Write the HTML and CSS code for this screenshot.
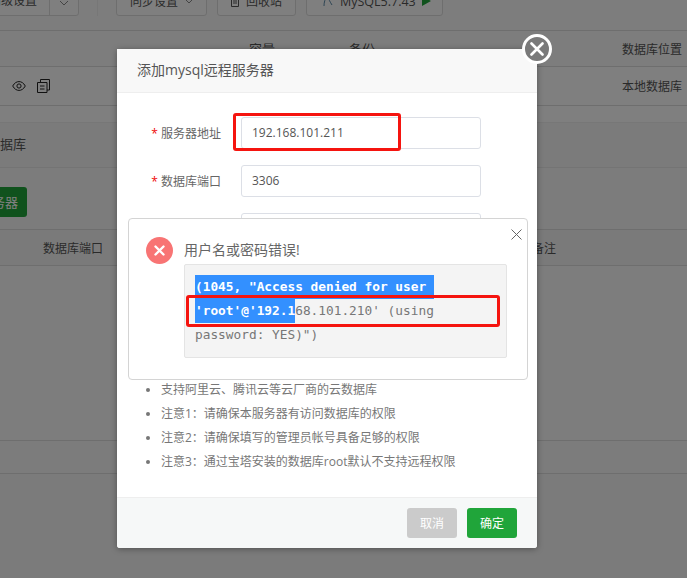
FILE: index.html
```html
<!DOCTYPE html>
<html lang="en">
<head>
  <meta charset="UTF-8" />
  <meta name="viewport" content="width=device-width, initial-scale=1.0" />
  <title>添加mysql远程服务器</title>
  <link rel="stylesheet" href="styles.css">
</head>
<body>
  <!-- Page behind the mask -->
  <div class="page">
    <div class="toolbar">
      <div class="tool-btn tool-split">
        <span class="tool-main">高级设置</span>
        <span class="tool-arrow"><svg width="10" height="6" viewBox="0 0 10 6"><path d="M1 1l4 4 4-4" fill="none" stroke="#888" /></svg></span>
      </div>
      <span class="tool-divider"></span>
      <div class="tool-btn tool-sync">同步设置
        <svg width="10" height="6" viewBox="0 0 10 6"><path d="M1 1l4 4 4-4" fill="none" stroke="#888" /></svg>
      </div>
      <div class="tool-btn tool-bin">
        <svg width="10" height="12" viewBox="0 0 10 12"><path d="M1.5 2.5h7v9h-7zM0 2.5h10M3.5 2.5v-2h3v2M4 5v4M6 5v4" fill="none" stroke="#555" /></svg>
        回收站
      </div>
      <div class="tool-btn tool-mysql">
        <svg width="12" height="12" viewBox="0 0 12 12"><path d="M2 11c0-4 1-7 3-9 2 2 3 5 5 8" fill="none" stroke="#5b8aa8" /></svg>
        MySQL5.7.43
        <svg width="9" height="10" viewBox="0 0 9 10"><path d="M0 0l9 5-9 5z" fill="#20a53a" /></svg>
      </div>
    </div>
    <div class="db-row db-head">
      <span class="col-size">容量</span>
      <span class="col-backup">备份</span>
      <span class="col-pos">数据库位置</span>
    </div>
    <div class="db-row db-item">
      <span class="row-icons">
        <svg width="14" height="10" viewBox="0 0 14 10"><path d="M.7 5C2.500 1.800 4.700.6 7 .6S11.500 1.800 13.300 5C11.500 8.200 9.300 9.400 7 9.400S2.500 8.200.7 5z" fill="none" stroke="#222" /><circle cx="7" cy="5" r="2.100" fill="none" stroke="#222" /></svg>
        <svg width="13" height="14" viewBox="0 0 13 14"><path d="M3.500 3V.5h9V11H10M.5 3.500h9.500v10H.5zM3 7h4.500M3 10h4.500" fill="none" stroke="#222" /></svg>
      </span>
      <span class="col-pos">本地数据库</span>
    </div>
    <div class="band"></div>
    <div class="tabs"><span class="tab-name">数据库</span></div>
    <div class="actions"><span class="add-btn">添加远程服务器</span></div>
    <div class="db-row server-head">
      <span class="col-port">数据库端口</span>
      <span class="col-note">备注</span>
    </div>
    <div class="server-empty"></div>
    <div class="server-foot"></div>
  </div>
  <div class="mask"></div>

  <!-- Add server dialog -->
  <div class="modal">
    <div class="modal-title">添加mysql远程服务器</div>
    <div class="modal-body">
      <div class="form-row">
        <label class="form-label">服务器地址</label>
        <div class="form-input">192.168.101.211</div>
      </div>
      <div class="form-row">
        <label class="form-label">数据库端口</label>
        <div class="form-input">3306</div>
      </div>
      <div class="form-row">
        <label class="form-label">管理员名称</label>
        <div class="form-input">root</div>
      </div>
      <div class="form-row">
        <label class="form-label">管理员密码</label>
        <div class="form-input"></div>
      </div>
      <div class="form-row">
        <label class="form-label">备注</label>
        <div class="form-input"></div>
      </div>
      <ul class="tips">
        <li>支持阿里云、腾讯云等云厂商的云数据库</li>
        <li>注意1：请确保本服务器有访问数据库的权限</li>
        <li>注意2：请确保填写的管理员帐号具备足够的权限</li>
        <li>注意3：通过宝塔安装的数据库root默认不支持远程权限</li>
      </ul>
    </div>
    <div class="modal-foot">
      <button class="btn btn-cancel">取消</button>
      <button class="btn btn-ok">确定</button>
    </div>
    <div class="modal-close">
      <svg width="14" height="14" viewBox="0 0 14 14"><path d="M1.500 1.500l11 11M12.500 1.500l-11 11" stroke="#fff" stroke-width="2.600" stroke-linecap="round" /></svg>
    </div>
    <div class="mark mark-address"></div>
  </div>

  <!-- Error message on top -->
  <div class="alert">
    <div class="alert-icon">
      <svg width="11" height="11" viewBox="0 0 11 11"><path d="M1.500 1.500l8 8M9.500 1.500l-8 8" stroke="#fff" stroke-width="2.400" stroke-linecap="round" /></svg>
    </div>
    <div class="alert-main">
      <div class="alert-title">用户名或密码错误!</div>
      <div class="alert-pre">
        <div class="pre-line"><span class="picked">(1045, "Access denied for user </span></div>
        <div class="pre-line"><span class="picked">'root'@'192.1</span>68.101.210' (using</div>
        <div class="pre-line">password: YES)")</div>
      </div>
    </div>
    <div class="alert-close">
      <svg width="11" height="11" viewBox="0 0 11 11"><path d="M.5.500l10 10M10.500.500l-10 10" stroke="#666" stroke-width="1" /></svg>
    </div>
    <div class="mark mark-host"></div>
  </div>
</body>
</html>
```

FILE: styles.css
```css
* {
  margin: 0;
  padding: 0;
  box-sizing: border-box;
}
html, body {
  height: 100%;
  overflow: hidden;
}
body {
  background: #f7f7f7;
  font-family: "Open Sans", "Noto Sans CJK SC", sans-serif;
  font-size: 12px;
  color: #666;
  position: relative;
}
/* Page behind the mask */
.page {
  background: #fafafa;
}
.toolbar {
  display: flex;
  align-items: flex-end;
  padding-bottom: 14px;
  border-bottom: 1px solid #ddd;
  height: 31px;
  margin-left: -12px;
}
.tool-btn {
  height: 30px;
  display: flex;
  align-items: center;
  gap: 6px;
  flex: none;
  border: 1px solid #ddd;
  border-radius: 3px;
  background: #fff;
  font-size: 12px;
  color: #555;
}
.tool-split {
  width: 91px;
  gap: 0;
}
.tool-main {
  width: 61px;
  height: 100%;
  line-height: 28px;
  white-space: nowrap;
  border-right: 1px solid #ddd;
}
.tool-arrow {
  width: 28px;
  text-align: center;
}
.tool-divider {
  width: 1px;
  height: 30px;
  background: #eee;
  margin: 0 18px;
  flex: none;
}
.tool-sync {
  width: 91px;
  padding-left: 13px;
}
.tool-bin {
  width: 79px;
  margin-left: 10px;
  padding-left: 12px;
}
.tool-mysql {
  width: 137px;
  margin-left: 10px;
  padding-left: 15px;
  font-size: 12.500px;
}
.db-row {
  display: flex;
  align-items: center;
  border-bottom: 1px solid #ddd;
  position: relative;
}
.db-head {
  height: 36px;
  font-size: 13px;
  padding-left: 249px;
  color: #555;
}
.col-backup {
  margin-left: 74px;
}
.col-pos {
  margin-left: auto;
  padding-right: 5px;
  font-size: 12px;
}
.db-item {
  height: 39px;
  background: #fff;
  padding-left: 12px;
  color: #555;
}
.row-icons {
  display: flex;
  align-items: center;
  gap: 11px;
}
.band {
  height: 17px;
  border-bottom: 1px solid #eee;
  background: #fff;
}
.tabs {
  height: 45px;
  display: flex;
  align-items: center;
  padding-bottom: 3px;
  border-bottom: 1px solid #e8e8e8;
  background: #f6f6f6;
}
.tab-name {
  margin-left: -13px;
  font-size: 13px;
  color: #555;
}
.actions {
  height: 61px;
  padding-top: 19px;
  background: #f9f9f9;
}
.add-btn {
  display: block;
  width: 100px;
  height: 30px;
  margin-left: -73px;
  background: #20a53a;
  border-radius: 3px;
  color: #fff;
  font-size: 13px;
  line-height: 30px;
  text-align: right;
  padding-right: 13px;
  white-space: nowrap;
}
.server-head {
  height: 37px;
  padding-left: 43px;
  background: #f5f5f5;
  border-top: 1px solid #ddd;
  color: #555;
}
.col-note {
  margin-left: 429px;
}
.server-empty {
  height: 175px;
  background: #fafafa;
  border-bottom: 1px solid #ddd;
}
.server-foot {
  height: 33px;
  background: #f8f8f8;
  border-bottom: 1px solid #ddd;
}
.mask {
  position: absolute;
  inset: 0;
  background: rgba(0, 0, 0, 0.5);
}
/* Add server dialog */
.modal {
  position: absolute;
  left: 117px;
  top: 49px;
  width: 420px;
  height: 499px;
  background: #fff;
  border-radius: 3px;
  box-shadow: 0 1px 6px rgba(0, 0, 0, 0.35);
  display: flex;
  flex-direction: column;
}
.modal-title {
  height: 44px;
  padding-left: 20px;
  background: #f8f8f8;
  border-bottom: 1px solid #eee;
  font-size: 14px;
  line-height: 41px;
  color: #555;
}
.modal-body {
  flex: 1;
  padding-top: 24px;
  overflow: hidden;
}
.form-row {
  display: flex;
  align-items: center;
  height: 32px;
  margin-bottom: 16px;
}
.form-label {
  width: 104px;
  text-align: right;
  color: #666;
}
.form-label::before {
  content: "* ";
  color: #ef0808;
}
.form-input {
  width: 240px;
  height: 32px;
  margin-left: 20px;
  padding-left: 10px;
  border: 1px solid #dcdfe6;
  border-radius: 3px;
  line-height: 30px;
  color: #555;
}
.tips {
  list-style: disc;
  margin-top: 37px;
  padding-left: 44px;
  color: #777;
}
.tips li {
  line-height: 24px;
}
.modal-foot {
  height: 51px;
  display: flex;
  justify-content: flex-end;
  gap: 10px;
  padding: 10px 20px 0 0;
  background: #f6f8f8;
  border-top: 1px solid #eee;
  border-radius: 0 0 3px 3px;
}
.btn {
  width: 50px;
  height: 30px;
  border: none;
  border-radius: 3px;
  color: #fff;
  font-family: inherit;
  font-size: 12px;
}
.btn-cancel {
  background: #cbcbcb;
}
.btn-ok {
  background: #20a53a;
}
.modal-close {
  position: absolute;
  top: -15px;
  right: -15px;
  width: 30px;
  height: 30px;
  display: flex;
  align-items: center;
  justify-content: center;
  background: #7a7a7a;
  border: 3px solid #fff;
  border-radius: 50%;
}
/* Red boxes drawn over the screenshot */
.mark {
  position: absolute;
  border: 3px solid #f5140f;
  border-radius: 3px;
}
.mark-address {
  left: 116px;
  top: 64px;
  width: 168px;
  height: 38px;
}
.mark-host {
  left: 57px;
  top: 76px;
  width: 314px;
  height: 32px;
}
/* Error message */
.alert {
  position: absolute;
  left: 128px;
  top: 218px;
  width: 400px;
  height: 162px;
  display: flex;
  padding: 18px 20px 0 17px;
  background: #fff;
  border: 1px solid #d4d4d4;
  border-radius: 4px;
}
.alert-icon {
  width: 27px;
  height: 27px;
  flex: none;
  display: flex;
  align-items: center;
  justify-content: center;
  background: #f87474;
  border-radius: 50%;
}
.alert-main {
  margin-left: 11px;
  flex: 1;
}
.alert-title {
  height: 27px;
  font-size: 14px;
  line-height: 25px;
  color: #666;
}
.alert-pre {
  height: 94px;
  padding: 10px 10px 0;
  background: #f4f4f4;
  border: 1px solid #e4e4e4;
  border-radius: 2px;
  font-family: "DejaVu Sans Mono", monospace;
  font-size: 12.800px;
  color: #777;
}
.pre-line {
  height: 24px;
  line-height: 24px;
  white-space: pre;
}
.picked {
  display: inline-block;
  background: #3390ff;
  color: #fff;
  font-weight: bold;
}
.alert-close {
  position: absolute;
  top: 10px;
  right: 5px;
  line-height: 0;
}
```
